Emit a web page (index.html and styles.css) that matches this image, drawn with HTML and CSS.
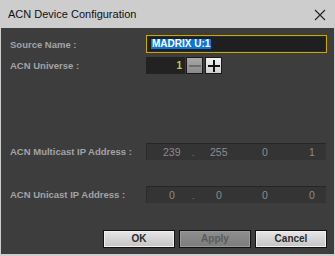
FILE: index.html
```html
<!DOCTYPE html>
<html>
<head>
<meta charset="utf-8">
<link rel="stylesheet" href="styles.css">
</head>
<body>
<div class="window">
  <div class="titlebar">
    <span class="title">ACN Device Configuration</span>
    <svg class="close" width="12" height="12" viewBox="0 0 12 12"><path d="M1 1 L11 11 M11 1 L1 11" stroke="#222" stroke-width="1.1" fill="none"/></svg>
  </div>
  <div class="content">
    <div class="row row-name">
      <span class="label">Source Name :</span>
      <div class="textbox"><span class="sel">MADRIX U:1</span></div>
    </div>
    <div class="row row-universe">
      <span class="label">ACN Universe :</span>
      <div class="spin">
        <div class="spinval">1</div>
        <div class="sbtn minus"><svg width="12" height="12" viewBox="0 0 12 12"><path d="M0 6 H12" stroke="#6e6e6e" stroke-width="2"/></svg></div>
        <div class="sbtn plus"><svg width="12" height="12" viewBox="0 0 12 12"><path d="M0 6 H12 M6 0 V12" stroke="#111" stroke-width="2"/></svg></div>
      </div>
    </div>
    <div class="row row-multi">
      <span class="label">ACN Multicast IP Address :</span>
      <div class="ip">
        <span class="oct o1">239</span><span class="dot">.</span><span class="oct o2">255</span><span class="oct o3">0</span><span class="oct o4">1</span>
      </div>
    </div>
    <div class="row row-uni">
      <span class="label">ACN Unicast IP Address :</span>
      <div class="ip">
        <span class="oct o1">0</span><span class="dot">.</span><span class="oct o2">0</span><span class="oct o3">0</span><span class="oct o4">0</span>
      </div>
    </div>
    <div class="buttons">
      <div class="btn">OK</div>
      <div class="btn disabled">Apply</div>
      <div class="btn">Cancel</div>
    </div>
  </div>
</div>
</body>
</html>
```
FILE: styles.css
```css
html, body {
  margin: 0;
  padding: 0;
  background: #cdcdcd;
}
.window {
  width: 335px;
  height: 256px;
  display: flex;
  flex-direction: column;
  background: #cdcdcd;
  box-sizing: border-box;
  padding: 0 1px 2px 1px;
}
.titlebar {
  height: 28px;
  flex: none;
  display: flex;
  align-items: center;
  justify-content: space-between;
  padding: 0 8px 0 7px;
}
.title {
  font-family: "Liberation Sans", Arial, sans-serif;
  font-size: 11px;
  color: #111;
}
.close { display: block; margin-top: 1px; }
.content {
  flex: 1;
  background: #3d3d3d;
  display: flex;
  flex-direction: column;
  padding: 7px 7px 0 9px;
}
.row {
  display: grid;
  grid-template-columns: 136px 1fr;
  align-items: center;
}
.label {
  font-family: "Liberation Sans", Arial, sans-serif;
  font-weight: bold;
  font-size: 9.5px;
  color: #a3a3a8;
}
.textbox {
  height: 18px;
  box-sizing: border-box;
  border: 1px solid #c8a800;
  background: #1f1f1f;
  box-shadow: inset 0 0 0 1px #2a2a2a;
  padding: 3px 4px;
  display: flex;
  align-items: center;
}
.sel {
  background: #0a74d8;
  color: #fff;
  font-family: "Liberation Sans", Arial, sans-serif;
  font-weight: bold;
  font-size: 10px;
  line-height: 10px;
  padding: 0 1px;
  white-space: nowrap;
}
.row-universe { margin-top: 4px; }
.spin {
  display: flex;
  height: 17px;
  align-items: stretch;
}
.spinval {
  width: 39px;
  background: #222;
  color: #b6d43a;
  font-family: "Liberation Sans", Arial, sans-serif;
  font-weight: bold;
  font-size: 10px;
  text-align: right;
  box-sizing: border-box;
  padding-right: 3px;
  line-height: 17px;
}
.sbtn {
  width: 17px;
  box-sizing: border-box;
  border: 1px solid #1a1a1a;
  display: flex;
  align-items: center;
  justify-content: center;
}
.minus {
  margin-left: 1px;
  background: linear-gradient(#a8a8a8, #8a8a8a);
}
.plus {
  margin-left: 2px;
  background: linear-gradient(#f2f2f2, #cfcfcf);
}
.row-multi { margin-top: 69px; }
.row-uni { margin-top: 26px; }
.ip {
  height: 17px;
  box-sizing: border-box;
  background: #343434;
  border-top: 1px solid #262626;
  border-left: 1px solid #2c2c2c;
  position: relative;
  font-family: "Liberation Sans", Arial, sans-serif;
  font-size: 10.5px;
  color: #8c8c8c;
  margin-right: 1px;
}
.oct {
  position: absolute;
  top: 2px;
}
.dot {
  position: absolute;
  left: 45px;
  top: 4px;
  font-size: 9px;
}
.row-multi .o1 { left: 16px; }
.row-multi .o2 { left: 63px; }
.row-uni .o1 { left: 22px; }
.row-uni .o2 { left: 69px; }
.o3 { left: 115px; }
.o4 { left: 162px; }
.buttons {
  margin-top: 27px;
  display: flex;
  justify-content: flex-end;
  gap: 4px;
  padding-right: 0;
}
.btn {
  width: 72px;
  height: 18px;
  box-sizing: border-box;
  border: 1px solid #111;
  background: linear-gradient(#e6e6e6, #c4c4c4);
  box-shadow: inset 0 0 0 1px #f0f0f0;
  font-family: "Liberation Sans", Arial, sans-serif;
  font-weight: bold;
  font-size: 10px;
  color: #2a2a2a;
  text-align: center;
  line-height: 16px;
}
.btn.disabled {
  background: linear-gradient(#8e8e8e, #7c7c7c);
  box-shadow: inset 0 0 0 1px #9a9a9a;
  color: #5a5a5a;
}
```
